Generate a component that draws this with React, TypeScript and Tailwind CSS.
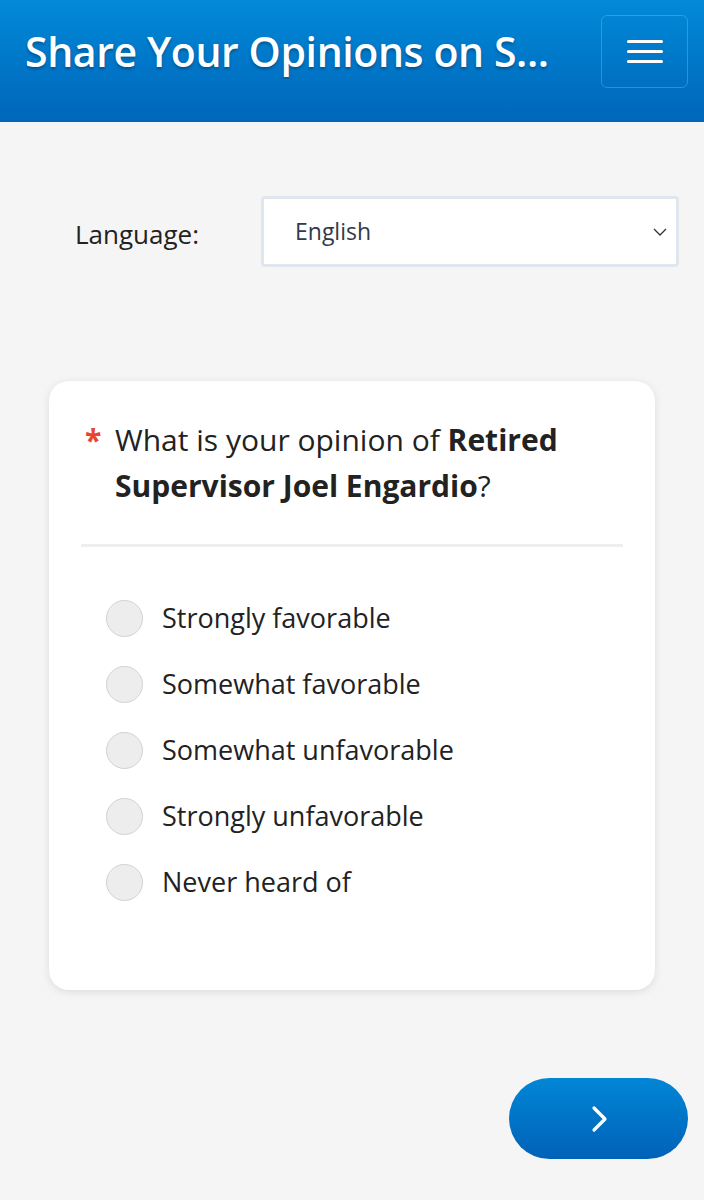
import React from "react";

const options = [
  "Strongly favorable",
  "Somewhat favorable",
  "Somewhat unfavorable",
  "Strongly unfavorable",
  "Never heard of",
];

export default function App() {
  return (
    <div
      className="min-h-[1200px] w-full bg-[#f5f5f5] text-[#222]"
      style={{ fontFamily: '"Open Sans", "Noto Sans", sans-serif' }}
    >
      <header className="flex h-[122px] items-start justify-between bg-gradient-to-b from-[#0289d8] to-[#0066ba] pl-[25px] pr-[16px] pt-[15px]">
        <h1 className="mt-[8px] truncate text-[41px] font-semibold leading-[56px] tracking-[-0.4px] text-white [text-shadow:0_2px_3px_rgba(0,0,0,0.3)]">
          Share Your Opinions on S...
        </h1>
        <button className="flex h-[73px] w-[87px] shrink-0 flex-col items-center justify-center gap-[7px] rounded-[6px] border border-white/20">
          <span className="h-[3px] w-[36px] rounded-full bg-white" />
          <span className="h-[3px] w-[36px] rounded-full bg-white" />
          <span className="h-[3px] w-[36px] rounded-full bg-white" />
        </button>
      </header>

      <div className="flex items-center pl-[75px] pr-[25px] pt-[74px]">
        <label className="w-[186px] pt-[5px] text-[26px] text-[#222]">Language:</label>
        <div className="relative flex h-[71px] flex-1 items-center rounded-[4px] border-[3px] border-[#dfe6ee] bg-white pl-[31px]">
          <span className="text-[23px] text-[#313a4b]">English</span>
          <svg
            className="absolute right-[9px] top-1/2 -translate-y-1/2"
            width="14"
            height="9"
            viewBox="0 0 14 9"
            fill="none"
          >
            <path d="M1 1.5l6 6 6-6" stroke="#333" strokeWidth="1.3" />
          </svg>
        </div>
      </div>

      <div className="mx-[49px] mt-[114px] h-[609px] rounded-[20px] bg-white px-[32px] pt-[36px] shadow-[0_2px_8px_rgba(0,0,0,0.1)]">
        <div className="flex">
          <span className="w-[34px] shrink-0 pl-[4px] text-[30px] font-bold leading-[46px] text-[#e8452c]">
            *
          </span>
          <div className="flex flex-col text-[30px] leading-[46px] text-[#222]">
            <div>
              <span>What is your opinion of </span>
              <span className="font-bold">Retired</span>
            </div>
            <div>
              <span className="font-bold">Supervisor Joel Engardio</span>
              <span>?</span>
            </div>
          </div>
        </div>
        <div className="mt-[35px] h-[3px] bg-[#eeeeee]" />
        <div className="mt-[53px] flex flex-col gap-[30px] pl-[25px]">
          {options.map((o) => (
            <label key={o} className="flex h-[36px] items-center">
              <span className="h-[37px] w-[37px] shrink-0 rounded-full border border-[#d2d2d2] bg-[#ededed]" />
              <span className="ml-[19px] text-[27px] text-[#222]">{o}</span>
            </label>
          ))}
        </div>
      </div>

      <div className="mt-[88px] flex justify-end pr-[16px]">
        <button className="flex h-[81px] w-[179px] items-center justify-center rounded-full bg-gradient-to-b from-[#0286d6] to-[#0062b8]">
          <svg width="22" height="30" viewBox="0 0 22 30" fill="none">
            <path
              d="M6 4l11 11-11 11"
              stroke="white"
              strokeWidth="3.2"
              strokeLinecap="round"
              strokeLinejoin="round"
            />
          </svg>
        </button>
      </div>
    </div>
  );
}
